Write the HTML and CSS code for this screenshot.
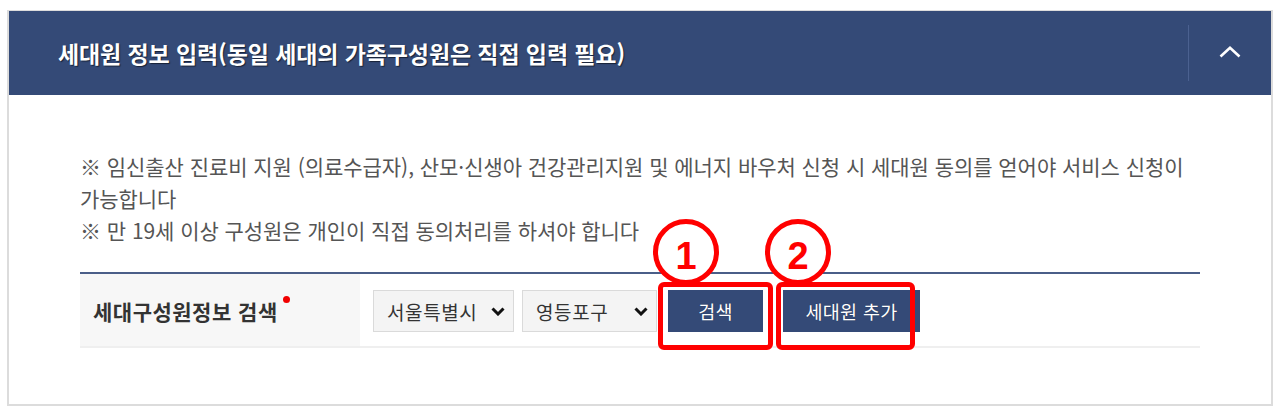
FILE: index.html
```html
<!DOCTYPE html>
<html lang="ko">
<head>
<meta charset="utf-8">
<title>세대원 정보 입력</title>
<link rel="stylesheet" href="styles.css">
</head>
<body>
<section class="panel">
  <header class="panel-header">
    <h2 class="panel-title">세대원 정보 입력(동일 세대의 가족구성원은 직접 입력 필요)</h2>
    <button class="toggle" type="button" aria-label="접기">
      <svg width="22" height="12" viewBox="0 0 22 12"><path d="M1.5 10.5 L11 1.8 L20.5 10.5" fill="none" stroke="#fff" stroke-width="2.6"/></svg>
    </button>
  </header>
  <div class="panel-body">
    <p class="notice">※ 임신출산 진료비 지원 (의료수급자), 산모·신생아 건강관리지원 및 에너지 바우처 신청 시 세대원 동의를 얻어야 서비스 신청이 가능합니다</p>
    <p class="notice">※ 만 19세 이상 구성원은 개인이 직접 동의처리를 하셔야 합니다</p>
    <div class="table">
      <div class="row">
        <div class="th">세대구성원정보 검색<span class="req"></span></div>
        <div class="td">
          <div class="select sel-1"><span>서울특별시</span><svg width="14" height="9" viewBox="0 0 14 9"><path d="M1.5 1.5 L7 7 L12.5 1.5" fill="none" stroke="#111" stroke-width="3"/></svg></div>
          <div class="select sel-2"><span>영등포구</span><svg width="14" height="9" viewBox="0 0 14 9"><path d="M1.5 1.5 L7 7 L12.5 1.5" fill="none" stroke="#111" stroke-width="3"/></svg></div>
          <button class="btn btn-search" type="button">검색</button>
          <button class="btn btn-add" type="button">세대원 추가</button>
        </div>
      </div>
      <div class="mark mark-box box-1"></div>
      <div class="mark mark-box box-2"></div>
      <div class="mark mark-circle circle-1">1</div>
      <div class="mark mark-circle circle-2">2</div>
    </div>
  </div>
</section>
</body>
</html>
```

FILE: styles.css
```css
* { box-sizing: border-box; }
html, body { margin: 0; padding: 0; background: #fff; }
body { font-family: "Noto Sans CJK KR", "Noto Sans", sans-serif; }

.panel {
  margin: 10px 0 0 7px;
  width: 1266px;
  height: 396px;
  border: 1px solid #dcdcdc;
  border-width: 1px 2px 2px 2px;
  background: #fff;
}

.panel-header {
  height: 84px;
  background: #344a77;
  display: flex;
  align-items: center;
  padding-left: 49px;
}
.panel-title {
  margin: 0;
  flex: 1;
  color: #fff;
  font-size: 23px;
  font-weight: 700;
  letter-spacing: -0.1px;
  text-shadow: 1px 1px 1px rgba(0,0,0,0.55);
}
.toggle {
  width: 83px;
  height: 56px;
  border: 0;
  border-left: 1px solid #4b6190;
  background: transparent;
  display: flex;
  align-items: center;
  justify-content: center;
  padding: 0 0 2px 0;
}

.panel-body {
  padding: 55px 71px 0 71px;
}
.notice {
  margin: 0;
  font-size: 21px;
  line-height: 32px;
  color: #555;
  letter-spacing: -0.05px;
}

.table {
  position: relative;
  margin-top: 26px;
  border-top: 2px solid #4a5e88;
}
.row {
  display: flex;
  height: 74px;
  border-bottom: 2px solid #efefef;
}
.th {
  width: 280px;
  background: #f7f7f7;
  display: flex;
  align-items: center;
  padding: 2px 0 0 13px;
  font-size: 21px;
  font-weight: 700;
  color: #333;
  letter-spacing: 0.5px;
}
.req {
  display: inline-block;
  width: 7px;
  height: 7px;
  border-radius: 50%;
  background: #f10000;
  margin: 0 0 24px 5px;
  align-self: center;
}
.td {
  flex: 1;
  display: flex;
  align-items: center;
  padding: 2px 0 0 13px;
}
.select {
  height: 42px;
  border: 1px solid #dadada;
  background: #f4f4f4;
  display: flex;
  align-items: center;
  justify-content: space-between;
  padding: 0 8px 0 13px;
  font-size: 19px;
  letter-spacing: 0.6px;
  color: #333;
}
.sel-1 { width: 141px; margin-right: 8px; }
.sel-2 { width: 135px; margin-right: 11px; }
.btn {
  height: 42px;
  border: 0;
  background: #344a77;
  color: #fff;
  font-family: inherit;
  font-size: 18.5px;
  letter-spacing: 0.3px;
  padding: 0;
  text-shadow: 0 0 1px rgba(0,0,0,0.4);
}
.btn-search { width: 95px; margin-right: 20px; }
.btn-add { width: 137px; }

.mark { position: absolute; }
.mark-box {
  top: 8px;
  height: 68px;
  border: 5px solid #ff0000;
  border-radius: 6px;
}
.box-1 { left: 578px; width: 115px; }
.box-2 { left: 696px; width: 139px; }
.mark-circle {
  top: -55px;
  width: 66px;
  height: 66px;
  border: 5px solid #ff0000;
  border-radius: 50%;
  background: #fff;
  color: #ff0000;
  font-family: "Liberation Sans", Arial, sans-serif;
  font-weight: 700;
  font-size: 38px;
  line-height: 58px;
  text-align: center;
  padding-top: 3px;
}
.circle-1 { left: 573px; }
.circle-2 { left: 685px; }
```
